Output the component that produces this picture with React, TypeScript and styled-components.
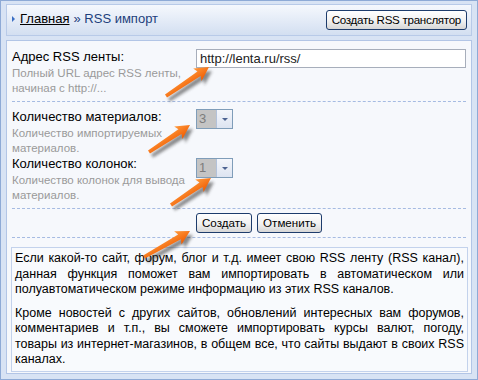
import React from 'react';
import styled, { createGlobalStyle } from 'styled-components';

const GlobalStyle = createGlobalStyle`
  body {
    margin: 0;
    font-family: "Liberation Sans", Arial, sans-serif;
  }
`;

const Frame = styled.div`
  position: relative;
  width: 478px;
  height: 380px;
  box-sizing: border-box;
  border: 1px solid #8eaad6;
  background: #d8e3f4;
  padding: 3px 5px 5px 5px;
  display: flex;
  flex-direction: column;
  gap: 4px;
`;

const Header = styled.div`
  flex-shrink: 0;
  height: 32px;
  box-sizing: border-box;
  border: 1px solid #b8cae8;
  background: linear-gradient(#f5f8fd, #d3dff1);
  display: flex;
  align-items: center;
  justify-content: space-between;
  padding: 0 4px 0 5px;
`;

const Crumbs = styled.div`
  display: flex;
  align-items: center;
  font-size: 13px;
  color: #1d3f7c;
  gap: 4px;
  margin-top: -3px;
`;

const Bullet = styled.span`
  width: 0;
  height: 0;
  border-top: 3px solid transparent;
  border-bottom: 3px solid transparent;
  border-left: 3px solid #3b6fc4;
  margin-right: 1px;
`;

const HomeLink = styled.a`
  color: #000;
  text-decoration: underline;
`;

const Button = styled.button<{ $tight?: boolean }>`
  height: 20px;
  box-sizing: border-box;
  border: 1px solid #1d3c6c;
  border-radius: 3px;
  background: linear-gradient(#ffffff, #f1f1f1 55%, #d6d6d6);
  font-family: "Liberation Sans", Arial, sans-serif;
  font-size: 11.6px;
  letter-spacing: ${p => (p.$tight ? '-0.3px' : '0')};
  color: #000;
  padding: 0 5px;
  line-height: 16px;
`;

const Panel = styled.div`
  flex: 1;
  min-height: 0;
  border: 1px solid #b2c5e6;
  background: #f6f8fc;
  display: flex;
  flex-direction: column;
  padding-bottom: 1px;
`;

const Form = styled.div`
  padding: 0 5px;
`;

const Row = styled.div<{ $pt: number; $pb: number; $dashed?: boolean }>`
  display: grid;
  grid-template-columns: 184px 1fr;
  padding: ${p => p.$pt}px 0 ${p => p.$pb}px;
  border-bottom: ${p => (p.$dashed ? '1px dashed #a6bbe2' : 'none')};
`;

const Label = styled.div`
  font-size: 13px;
  line-height: 16px;
  color: #000;
`;

const Hint = styled.div`
  font-size: 11.5px;
  line-height: 15px;
  color: #9a9a9a;
  margin-top: 1px;
  width: 180px;
`;

const Control = styled.div<{ $top: number }>`
  padding-top: ${p => p.$top}px;
`;

const TextInput = styled.div`
  height: 19px;
  box-sizing: border-box;
  border: 1px solid #a7aebb;
  background: #fff;
  font-size: 13px;
  line-height: 17px;
  padding-left: 3px;
  color: #222;
`;

const Select = styled.div`
  display: inline-flex;
  height: 20px;
  box-sizing: border-box;
  border: 1px solid #7f9db9;
`;

const SelectValue = styled.span`
  width: 19px;
  background: #c4c4c4;
  color: #7c7c7c;
  font-size: 13px;
  line-height: 18px;
  padding-left: 2px;
  box-sizing: border-box;
`;

const SelectToggle = styled.span`
  width: 15px;
  background: linear-gradient(#f4f6fb, #dde4f1);
  border-left: 1px solid #b3c2da;
  display: flex;
  align-items: center;
  justify-content: center;
  &::after {
    content: '';
    border-left: 3px solid transparent;
    border-right: 3px solid transparent;
    border-top: 3px solid #4d6391;
  }
`;

const Actions = styled.div`
  display: flex;
  gap: 5px;
  padding: 4px 0 4px 184px;
  border-bottom: 1px dashed #a6bbe2;
`;

const Info = styled.div`
  flex: 1;
  min-height: 0;
  overflow: hidden;
  margin: 9px 3px 0 4px;
  border: 1px solid #c3d2ec;
  background: #f8fafd;
  padding: 3px 3px 0;
  font-size: 12.5px;
  line-height: 15.5px;
  color: #000;
  text-align: justify;
`;

const Para = styled.p`
  margin: 0 0 8px;
`;

const Overlay = styled.svg`
  position: absolute;
  left: 0;
  top: 0;
  pointer-events: none;
`;

const arrows = [
  { x1: 165, y1: 95, x2: 208, y2: 66 },
  { x1: 148, y1: 151, x2: 189, y2: 124 },
  { x1: 170, y1: 204, x2: 210, y2: 177 },
  { x1: 143, y1: 256, x2: 189, y2: 230 },
];

const Arrow: React.FC<{ x1: number; y1: number; x2: number; y2: number }> = ({ x1, y1, x2, y2 }) => {
  const len = Math.hypot(x2 - x1, y2 - y1);
  const angle = (Math.atan2(y2 - y1, x2 - x1) * 180) / Math.PI;
  const h = len - 12;
  const shape = `M0,-1.8 L${h},-2.8 L${h - 2},-7.5 L${len},0 L${h - 2},7.5 L${h},2.8 L0,1.8 Z`;
  return (
    <g>
      <g transform={`translate(${x1 + 3} ${y1 + 4}) rotate(${angle})`}>
        <path d={shape} fill="#2a2a2a" opacity={0.55} filter="url(#blur)" />
      </g>
      <g transform={`translate(${x1} ${y1}) rotate(${angle})`}>
        <path d={shape} fill="url(#orange)" />
      </g>
    </g>
  );
};

export default function App() {
  return (
    <>
      <GlobalStyle />
      <Frame>
        <Header>
          <Crumbs>
            <Bullet />
            <HomeLink>Главная</HomeLink>
            <span>» RSS импорт</span>
          </Crumbs>
          <Button $tight>Создать RSS транслятор</Button>
        </Header>
        <Panel>
          <Form>
            <Row $pt={8} $pb={5} $dashed>
              <div>
                <Label>Адрес RSS ленты:</Label>
                <Hint>Полный URL адрес RSS ленты, начиная с http://...</Hint>
              </div>
              <Control $top={0}>
                <TextInput>http://lenta.ru/rss/</TextInput>
              </Control>
            </Row>
            <Row $pt={7} $pb={0}>
              <div>
                <Label>Количество материалов:</Label>
                <Hint>Количество импортируемых материалов.</Hint>
              </div>
              <Control $top={0}>
                <Select>
                  <SelectValue>3</SelectValue>
                  <SelectToggle />
                </Select>
              </Control>
            </Row>
            <Row $pt={0} $pb={5} $dashed>
              <div>
                <Label>Количество колонок:</Label>
                <Hint>Количество колонок для вывода материалов.</Hint>
              </div>
              <Control $top={2}>
                <Select>
                  <SelectValue>1</SelectValue>
                  <SelectToggle />
                </Select>
              </Control>
            </Row>
            <Actions>
              <Button>Создать</Button>
              <Button>Отменить</Button>
            </Actions>
          </Form>
          <Info>
            <Para>
              Если какой-то сайт, форум, блог и т.д. имеет свою RSS ленту (RSS канал), данная функция поможет вам
              импортировать в автоматическом или полуавтоматическом режиме информацию из этих RSS каналов.
            </Para>
            <Para>
              Кроме новостей с других сайтов, обновлений интересных вам форумов, комментариев и т.п., вы сможете
              импортировать курсы валют, погоду, товары из интернет-магазинов, в общем все, что сайты выдают в своих
              RSS каналах.
            </Para>
          </Info>
        </Panel>
        <Overlay width={478} height={380}>
          <defs>
            <linearGradient id="orange" x1="0" y1="0" x2="0" y2="1">
              <stop offset="0" stopColor="#ff9a3c" />
              <stop offset="1" stopColor="#f05a00" />
            </linearGradient>
            <filter id="blur" x="-20%" y="-50%" width="140%" height="200%">
              <feGaussianBlur stdDeviation="1.8" />
            </filter>
          </defs>
          {arrows.map((a, i) => (
            <Arrow key={i} {...a} />
          ))}
        </Overlay>
      </Frame>
    </>
  );
}
